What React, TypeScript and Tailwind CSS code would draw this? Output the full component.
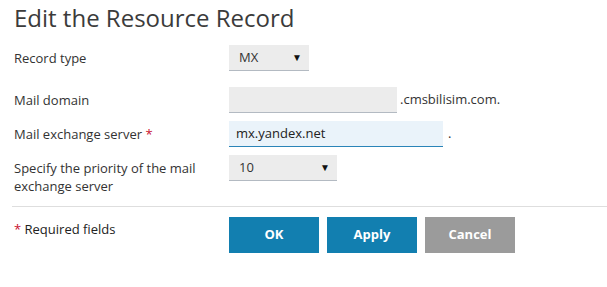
import { ReactNode } from 'react'

function Label({ children, required }: { children: ReactNode; required?: boolean }) {
  return (
    <div className="w-[215px] shrink-0 pr-[15px] pt-[4px] text-[13px] leading-[18px] text-[#333]">
      {children}
      {required && <span className="text-[#c8102e]"> *</span>}
    </div>
  )
}

function FakeSelect({ value, width }: { value: string; width: string }) {
  return (
    <div className={`flex h-[26px] ${width} items-center justify-between border-b border-[#b3bac2] bg-[#ececec] pl-[10px] pr-[7px] text-[13px] text-[#333]`}>
      <span>{value}</span>
      <span className="text-[10px] text-[#111]">▼</span>
    </div>
  )
}

export default function App() {
  return (
    <div className="min-h-[287px] w-[607px] bg-white font-['Open_Sans',sans-serif] text-[#333]">
      <h1 className="pl-[14px] pt-[2px] text-[24px] leading-[32px] text-[#3b3b3b]">Edit the Resource Record</h1>

      <div className="mt-[11px] flex flex-col gap-[8px] pl-[14px]">
        <div className="mb-[8px] flex items-start">
          <Label>Record type</Label>
          <FakeSelect value="MX" width="w-[80px]" />
        </div>

        <div className="flex items-start">
          <Label>Mail domain</Label>
          <div className="flex items-center">
            <div className="h-[26px] w-[168px] border-b border-[#b3bac2] bg-[#ececec]" />
            <span className="ml-[3px] text-[13px]">.cmsbilisim.com.</span>
          </div>
        </div>

        <div className="flex items-start">
          <Label required>Mail exchange server</Label>
          <div className="flex items-center">
            <div className="flex h-[26px] w-[214px] items-center border-b border-[#2a84b8] bg-[#eaf3fa] pl-[7px] text-[13px] text-[#222]">
              mx.yandex.net
            </div>
            <span className="ml-[5px] text-[13px]">.</span>
          </div>
        </div>

        <div className="flex items-start">
          <Label>Specify the priority of the mail exchange server</Label>
          <FakeSelect value="10" width="w-[108px]" />
        </div>
      </div>

      <div className="ml-[12px] mt-[11px] border-t border-[#dedede]" />

      <div className="flex items-start pl-[14px] pt-[10px]">
        <div className="w-[215px] shrink-0 pt-[3px] text-[13px] leading-[18px] text-[#222]">
          <span className="text-[#c8102e]">*</span> Required fields
        </div>
        <div className="flex gap-[8px]">
          <button className="h-[36px] w-[90px] bg-[#127fb0] text-[13px] font-bold text-white">OK</button>
          <button className="h-[36px] w-[90px] bg-[#127fb0] text-[13px] font-bold text-white">Apply</button>
          <button className="h-[36px] w-[90px] bg-[#9b9b9b] text-[13px] font-bold text-white">Cancel</button>
        </div>
      </div>
    </div>
  )
}
